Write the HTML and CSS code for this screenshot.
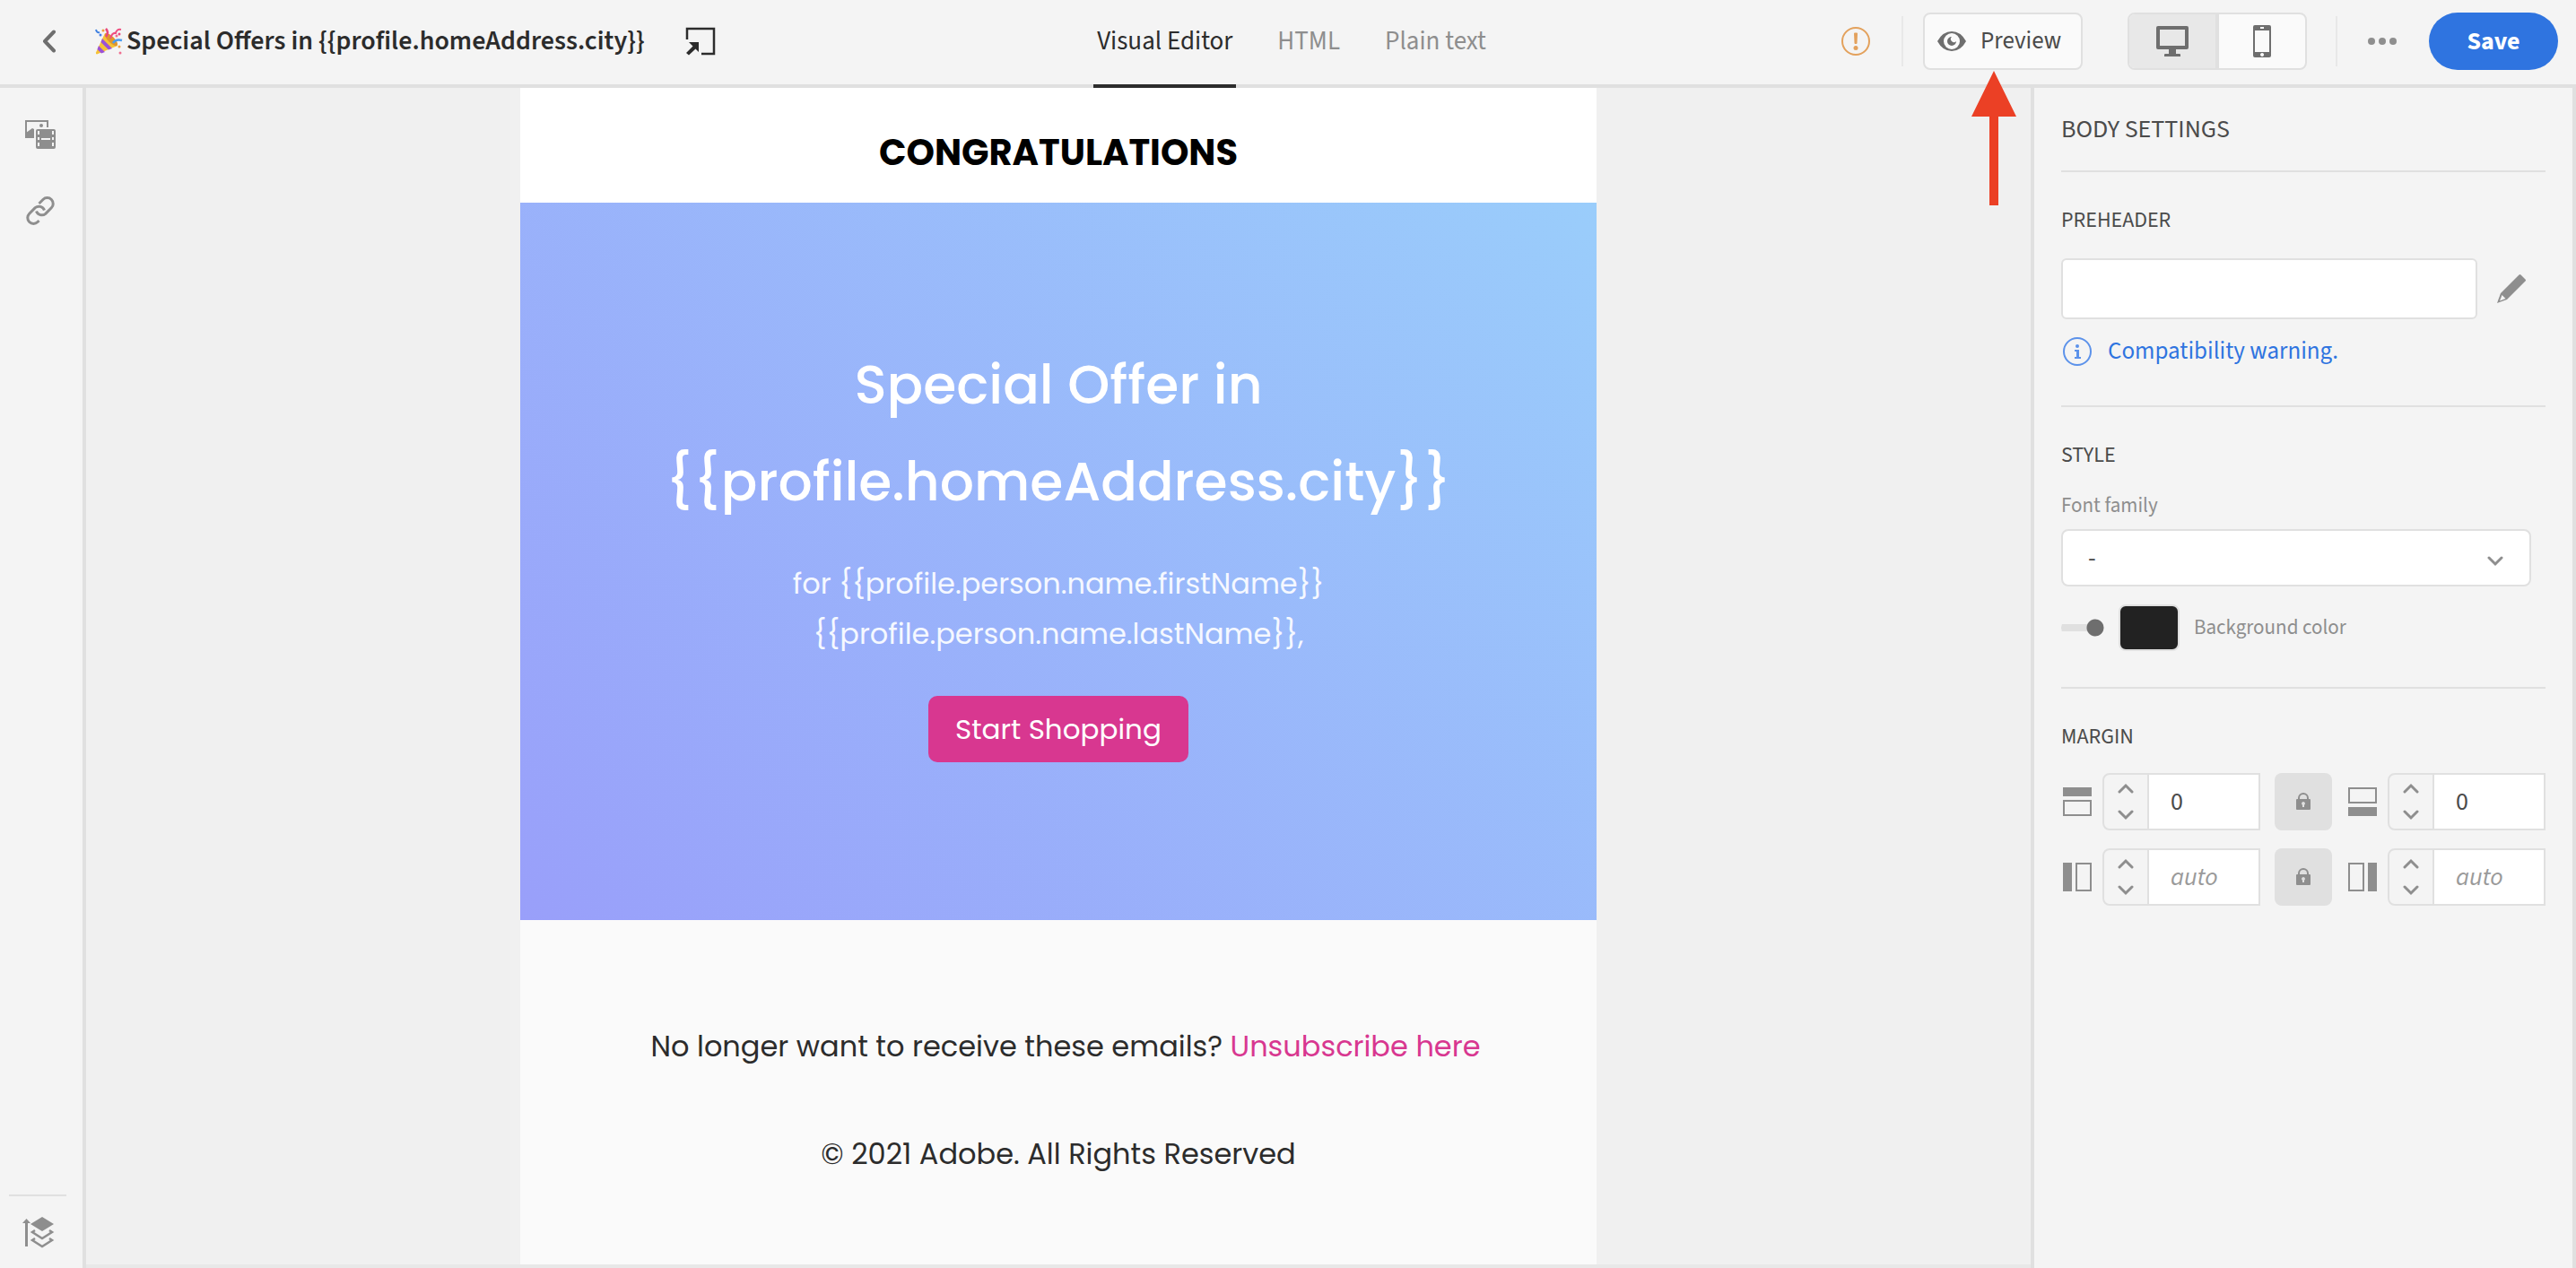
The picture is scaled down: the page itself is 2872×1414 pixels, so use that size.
FILE: index.html
```
<!DOCTYPE html>
<html lang="en">
<head>
<meta charset="utf-8">
<title>Special Offers – Email editor</title>
<link rel="stylesheet" href="styles.css">
</head>
<body>
<header class="topbar">
  <div class="topbar-left">
    <button class="icon-btn back" aria-label="Back"><svg width="16" height="26" viewBox="0 0 16 26"><path d="M13 2.500L3 13l10 10.500" fill="none" stroke="#6e6e6e" stroke-width="4" stroke-linecap="round" stroke-linejoin="round"/></svg></button>
    <svg class="party" width="31" height="31" viewBox="0 0 31 31" aria-hidden="true">
      <path d="M11 6l14 14L2 29.500q-1.500 0-1-2z" fill="#f6c236"/>
      <path d="M8 12l11 11-4 1.500L6.500 16zM4 20l7 7-4 1.500L2.500 24z" fill="#9b51d6"/>
      <ellipse cx="18" cy="13" rx="3.500" ry="9.500" transform="rotate(-45 18 13)" fill="#e0972c"/>
      <path d="M12 1q4 4 0 9" fill="none" stroke="#e8477c" stroke-width="2.500"/>
      <path d="M20 17q3-5 10-3" fill="none" stroke="#4b9cf0" stroke-width="2.500"/>
      <path d="M17 12q2-7 6-6 1-5 6-4" fill="none" stroke="#ef4f80" stroke-width="2"/>
      <path d="M1 2q1 4 4 3" fill="none" stroke="#3d7fe0" stroke-width="2"/>
      <circle cx="6" cy="8" r="1.500" fill="#4b7fe8"/><circle cx="27" cy="21" r="1.500" fill="#efa03c"/><circle cx="28" cy="28" r="1.500" fill="#ef6f90"/><circle cx="24" cy="9" r="1.500" fill="#ef6f90"/><circle cx="9" cy="3" r="1.500" fill="#efa03c"/><circle cx="27" cy="7" r="1.500" fill="#e84a80"/>
    </svg>
    <h1 class="title">Special Offers in {{profile.homeAddress.city}}</h1>
    <button class="icon-btn" aria-label="Open details"><svg width="34" height="32" viewBox="0 0 34 32"><path d="M2 14V2h30v28H18" fill="none" stroke="#2c2c2c" stroke-width="2.500"/><path d="M4 17h11v11l-3.500-3.500L4 31.500 1 29l7.500-7.500z" fill="#2c2c2c"/></svg></button>
  </div>
  <nav class="tabs">
    <a class="tab tab-active" href="#visual">Visual Editor</a>
    <a class="tab" href="#html">HTML</a>
    <a class="tab" href="#plain">Plain text</a>
  </nav>
  <div class="topbar-right">
    <button class="icon-btn alert" aria-label="Alerts"><svg width="32" height="32" viewBox="0 0 32 32"><circle cx="16" cy="16" r="15" fill="none" stroke="#e3a15c" stroke-width="2"/><path d="M14 7.500q0-1 1-1h2q1 0 1 1L17.500 18q0 1-1 1h-1q-1 0-1-1z" fill="#e3a15c"/><circle cx="16" cy="23.500" r="2.500" fill="#e3a15c"/></svg></button>
    <span class="rule"></span>
    <div class="preview-wrap">
      <button class="preview"><svg width="32" height="24" viewBox="0 0 32 24"><path d="M0 12Q6 1 16 1t16 11q-6 11-16 11T0 12z" fill="#6e6e6e"/><circle cx="16" cy="12" r="9" fill="#fafafa"/><path d="M16 7a5 5 0 1 0 5 5 2.500 2.500 0 0 1-5-5z" fill="#6e6e6e"/></svg>Preview</button>
      <svg class="pointer" width="52" height="152" viewBox="0 0 52 152" aria-hidden="true"><path d="M26 0l25 51H31v99H21V51H1z" fill="#eb4025"/></svg>
    </div>
    <div class="devices">
      <button class="device device-on" aria-label="Desktop"><svg width="36" height="34" viewBox="0 0 36 34"><path d="M2 0h32q2 0 2 2v22q0 2-2 2H22v5h4q1 0 1 1v2H9v-2q0-1 1-1h4v-5H2q-2 0-2-2V2q0-2 2-2zm2 4v18h28V4z" fill="#6e6e6e" fill-rule="evenodd"/></svg></button>
      <button class="device" aria-label="Mobile"><svg width="20" height="36" viewBox="0 0 20 36"><path d="M2 0h16q2 0 2 2v32q0 2-2 2H2q-2 0-2-2V2q0-2 2-2zm0 6v24h16V6zm6-4v2h4V2zm2 29a2 2 0 1 0 .1 0z" fill="#6e6e6e" fill-rule="evenodd"/></svg></button>
    </div>
    <span class="rule"></span>
    <button class="icon-btn more" aria-label="More"><svg width="32" height="8" viewBox="0 0 32 8" fill="#8e8e8e"><circle cx="4" cy="4" r="4"/><circle cx="16" cy="4" r="4"/><circle cx="28" cy="4" r="4"/></svg></button>
    <button class="save">Save</button>
  </div>
</header>
<div class="workspace">
  <aside class="rail">
    <button class="icon-btn" aria-label="Assets"><svg width="34" height="32" viewBox="0 0 34 32"><path d="M25 8V1H1v18h9" fill="none" stroke="#8e8e8e" stroke-width="2"/><path d="M1 14l7-5 2 1v10H0z" fill="#8e8e8e"/><circle cx="18" cy="6" r="2" fill="#8e8e8e"/><rect x="12" y="10" width="22" height="22" rx="2" fill="#8e8e8e"/><path d="M15 12v4m0 3v3m0 3v4m16-17v4m0 3v3m0 3v4M18 21h10" stroke="#f4f4f4" stroke-width="2"/></svg></button>
    <button class="icon-btn" aria-label="Links"><svg width="34" height="34" viewBox="0 0 34 34" fill="none" stroke="#8e8e8e" stroke-width="3"><path d="M15.500 9l4.500-4.500a6.500 6.500 0 0 1 9.300 9.300l-6.500 6.500a6.500 6.500 0 0 1-10.300-2.800"/><path d="M15.500 28L14 29.500a6.500 6.500 0 0 1-9.300-9.300l6.500-6.500a6.500 6.500 0 0 1 10.300 2.800"/></svg></button>
    <div class="rail-bottom">
      <button class="icon-btn" aria-label="Layers"><svg width="36" height="36" viewBox="0 0 36 36" fill="none" stroke="#8e8e8e"><path d="M4.500 34V6" stroke-width="3"/><path d="M0 8l4.500-5L9 8z" fill="#8e8e8e" stroke="none"/><path d="M22 1l13 8-13 8-13-8z" fill="#8e8e8e" stroke="none"/><path d="M14 16l-3 2 11 7 11-7-3-2M14 25l-3 2 11 7 11-7-3-2" stroke-width="2.500"/></svg></button>
    </div>
  </aside>
  <main class="canvas">
    <article class="email">
      <h2 class="congrats">CONGRATULATIONS</h2>
      <section class="hero">
        <h3 class="hero-title">Special Offer in<br>{{profile.homeAddress.city}}</h3>
        <p class="hero-text">for {{profile.person.name.firstName}}<br>{{profile.person.name.lastName}},</p>
        <a class="shop" href="#shop">Start Shopping</a>
      </section>
      <footer class="foot">
        <p class="optout">No longer want to receive these emails? <a class="unsub" href="#unsubscribe">Unsubscribe here</a></p>
        <p>© 2021 Adobe. All Rights Reserved</p>
      </footer>
    </article>
  </main>
  <aside class="panel">
    <h2 class="panel-title">BODY SETTINGS</h2>
    <section class="group">
      <h3 class="group-title"><label for="preheader">PREHEADER</label></h3>
      <div class="pre-row">
        <input class="field" id="preheader" type="text">
        <button class="icon-btn" aria-label="Edit preheader"><svg width="32" height="32" viewBox="0 0 32 32"><path d="M24.500.500q1-1 2 0l5 5q1 1 0 2L11 28 0 32 4 21z" fill="#8e8e8e"/><path d="M5.500 23l4 4-6.500 2.500z" fill="#f4f4f4"/></svg></button>
      </div>
      <a class="warn" href="#compatibility"><svg width="32" height="32" viewBox="0 0 32 32"><circle cx="16" cy="16" r="15" fill="none" stroke="#5c92ea" stroke-width="2"/><circle cx="16" cy="10" r="2" fill="#5c92ea"/><path d="M13 14h5v8h2v2h-7v-2h2v-6h-2z" fill="#5c92ea"/></svg>Compatibility warning.</a>
    </section>
    <section class="group">
      <h3 class="group-title">STYLE</h3>
      <label class="label" for="family">Font family</label>
      <div class="select-wrap">
        <select class="select" id="family"><option>-</option></select>
        <svg class="caret" width="18" height="12" viewBox="0 0 18 12"><path d="M2 2l7 7 7-7" fill="none" stroke="#8e8e8e" stroke-width="3" stroke-linecap="round"/></svg>
      </div>
      <div class="color-row">
        <input class="switch" type="checkbox" id="bg-on" checked>
        <button class="swatch" aria-label="Pick background color"></button>
        <label class="label" for="bg-on">Background color</label>
      </div>
    </section>
    <section class="group">
      <h3 class="group-title">MARGIN</h3>
      <div class="margin-row">
        <svg class="side" width="32" height="32" viewBox="0 0 32 32"><path d="M0 0h32v10H0z" fill="#8e8e8e"/><path d="M1 15h30v16H1z" fill="none" stroke="#8e8e8e" stroke-width="2"/></svg>
        <div class="stepper">
          <div class="steps"><button class="step" aria-label="Increase top"><svg width="18" height="12" viewBox="0 0 18 12"><path d="M2 10l7-7 7 7"/></svg></button><button class="step" aria-label="Decrease top"><svg width="18" height="12" viewBox="0 0 18 12"><path d="M2 2l7 7 7-7"/></svg></button></div>
          <input class="num" type="text" value="0" aria-label="Top margin">
        </div>
        <button class="lock" aria-label="Lock vertical margins"><svg width="16" height="20" viewBox="0 0 16 20"><path d="M3 8V6a5 5 0 0 1 10 0v2" fill="none" stroke="#8e8e8e" stroke-width="2"/><path d="M1 7h14q1 0 1 1v10q0 1-1 1H1q-1 0-1-1V8q0-1 1-1zm7 3a2 2 0 0 0-1 3.700V16h2v-2.300A2 2 0 0 0 8 10z" fill="#8e8e8e" fill-rule="evenodd"/></svg></button>
        <svg class="side" width="32" height="32" viewBox="0 0 32 32"><path d="M0 22h32v10H0z" fill="#8e8e8e"/><path d="M1 1h30v16H1z" fill="none" stroke="#8e8e8e" stroke-width="2"/></svg>
        <div class="stepper">
          <div class="steps"><button class="step" aria-label="Increase bottom"><svg width="18" height="12" viewBox="0 0 18 12"><path d="M2 10l7-7 7 7"/></svg></button><button class="step" aria-label="Decrease bottom"><svg width="18" height="12" viewBox="0 0 18 12"><path d="M2 2l7 7 7-7"/></svg></button></div>
          <input class="num" type="text" value="0" aria-label="Bottom margin">
        </div>
      </div>
      <div class="margin-row">
        <svg class="side" width="32" height="32" viewBox="0 0 32 32"><path d="M0 0h10v32H0z" fill="#8e8e8e"/><path d="M15 1h16v30H15z" fill="none" stroke="#8e8e8e" stroke-width="2"/></svg>
        <div class="stepper">
          <div class="steps"><button class="step" aria-label="Increase left"><svg width="18" height="12" viewBox="0 0 18 12"><path d="M2 10l7-7 7 7"/></svg></button><button class="step" aria-label="Decrease left"><svg width="18" height="12" viewBox="0 0 18 12"><path d="M2 2l7 7 7-7"/></svg></button></div>
          <input class="num" type="text" placeholder="auto" aria-label="Left margin">
        </div>
        <button class="lock" aria-label="Lock horizontal margins"><svg width="16" height="20" viewBox="0 0 16 20"><path d="M3 8V6a5 5 0 0 1 10 0v2" fill="none" stroke="#8e8e8e" stroke-width="2"/><path d="M1 7h14q1 0 1 1v10q0 1-1 1H1q-1 0-1-1V8q0-1 1-1zm7 3a2 2 0 0 0-1 3.700V16h2v-2.300A2 2 0 0 0 8 10z" fill="#8e8e8e" fill-rule="evenodd"/></svg></button>
        <svg class="side" width="32" height="32" viewBox="0 0 32 32"><path d="M22 0h10v32H22z" fill="#8e8e8e"/><path d="M1 1h16v30H1z" fill="none" stroke="#8e8e8e" stroke-width="2"/></svg>
        <div class="stepper">
          <div class="steps"><button class="step" aria-label="Increase right"><svg width="18" height="12" viewBox="0 0 18 12"><path d="M2 10l7-7 7 7"/></svg></button><button class="step" aria-label="Decrease right"><svg width="18" height="12" viewBox="0 0 18 12"><path d="M2 2l7 7 7-7"/></svg></button></div>
          <input class="num" type="text" placeholder="auto" aria-label="Right margin">
        </div>
      </div>
    </section>
  </aside>
</div>
</body>
</html>
```
FILE: styles.css
```
* { box-sizing: border-box; }
body {
  margin: 0;
  min-height: 100vh;
  display: flex;
  flex-direction: column;
  background: #f0f0f0;
  color: #4b4b4b;
  font: 28px/32px "Adobe Clean", "Source Sans 3", "Source Sans Pro", "Open Sans", sans-serif;
}
h1, h2, h3, p { margin: 0; font-weight: 400; }
button, input, select { font: inherit; color: inherit; margin: 0; }
button { padding: 0; border: 0; background: none; }
a { color: inherit; text-decoration: none; }
svg { display: block; flex: none; }
.icon-btn { display: flex; align-items: center; justify-content: center; flex: none; }

.topbar {
  display: grid;
  grid-template-columns: 1fr auto 1fr;
  height: 98px;
  border-bottom: 4px solid #e0e0e0;
  background: #f4f4f4;
}
.topbar-left { display: flex; align-items: center; padding-left: 47px; padding-bottom: 2px; }
.party { margin-left: 43px; margin-right: 4px; }
.title { font-size: 30px; font-weight: 600; color: #2c2c2c; margin-right: 45px; white-space: nowrap; }
.tabs { display: flex; gap: 42px; margin: 0 0 -4px 8px; }
.tab { padding: 30px 4px 0; font-size: 29px; color: #8e8e8e; border-bottom: 4px solid transparent; }
.tab-active { color: #2c2c2c; border-color: #2c2c2c; }
.topbar-right { display: flex; align-items: center; justify-content: flex-end; padding-right: 20px; padding-bottom: 2px; }
.rule { width: 2px; height: 56px; background: #e8e8e8; }
.alert { margin-right: 35px; }
.preview-wrap { position: relative; margin: 0 50px 0 22px; }
.preview {
  display: flex; align-items: center; gap: 16px;
  width: 178px; height: 64px; padding-left: 14px;
  border: 2px solid #e0e0e0; border-radius: 8px; background: #fafafa;
  font-size: 27px;
}
.pointer { position: absolute; left: 53px; top: 65px; }
.devices { display: flex; width: 200px; height: 64px; margin-right: 32px; border: 2px solid #e0e0e0; border-radius: 8px; overflow: hidden; background: #fafafa; }
.device { flex: 1; display: flex; align-items: center; justify-content: center; }
.device-on { background: #e8e8e8; border-right: 4px solid #e0e0e0; }
.more { margin: 0 36px 0 34px; }
.save { width: 144px; height: 64px; border-radius: 32px; background: #2f74e0; color: #fff; font-weight: 700; }

.workspace { flex: 1; display: flex; }
.rail { width: 96px; flex: none; display: flex; flex-direction: column; align-items: center; gap: 52px; padding: 36px 2px 0 0; border-right: 4px solid #e0e0e0; background: #f4f4f4; }
.rail-bottom { align-self: flex-start; margin: auto 0 0 10px; width: 64px; height: 82px; padding: 22px 0 0 15px; border-top: 2px solid #e0e0e0; }
.rail-bottom .icon-btn { width: 36px; }
.canvas { flex: 1; display: flex; justify-content: center; border-bottom: 4px solid #e8e8e8; }
.email { width: 1200px; display: flex; flex-direction: column; background: #fafafa; font-family: Poppins, Inter, sans-serif; text-align: center; }
.congrats { height: 128px; padding-top: 48px; background: #fff; color: #000; font-size: 40px; line-height: 48px; font-weight: 700; }
.hero { height: 800px; padding-top: 149px; background: linear-gradient(45deg, #999ffa, #9acdfb); color: #fff; }
.hero-title { font-size: 60px; line-height: 108px; font-weight: 500; }
.hero-text { margin-top: 32px; font-size: 32px; line-height: 56px; color: #f5f8ff; }
.shop { display: inline-block; margin-top: 41px; padding: 0 30px; border-radius: 10px; background: #d83790; font-size: 31px; line-height: 74px; }
.foot { display: flex; flex-direction: column; gap: 64px; padding-top: 113px; font-size: 32px; line-height: 56px; color: #2c2c2c; }
.optout { padding-left: 16px; }
.unsub { color: #d83790; }

.panel { width: 608px; flex: none; padding: 0 30px; border-left: 4px solid #e0e0e0; border-right: 4px solid #e0e0e0; background: #f4f4f4; }
.panel-title { padding: 30px 0; border-bottom: 2px solid #e0e0e0; font-size: 28px; line-height: 32px; }
.group { padding-top: 38px; }
.group + .group { border-top: 2px solid #e0e0e0; }
.group-title { font-size: 24px; line-height: 32px; }
.pre-row { display: flex; align-items: center; gap: 22px; margin-top: 26px; }
.field { flex: none; width: 464px; height: 68px; border: 2px solid #e0e0e0; border-radius: 6px; background: #fff; padding: 0 28px; }
.warn { display: flex; align-items: center; gap: 18px; margin: 20px 0 44px 2px; color: #2f74e0; font-size: 27px; }
.label { color: #8e8e8e; font-size: 23px; }
.group-title + .label { display: block; margin: 24px 0 10px; }
.select-wrap { position: relative; width: 524px; }
.select { display: block; appearance: none; width: 100%; height: 64px; padding: 0 28px; border: 2px solid #e0e0e0; border-radius: 8px; background: #fff; }
.caret { position: absolute; right: 31px; top: 30px; }
.color-row { display: flex; align-items: center; margin: 20px 0 40px; }
.switch { appearance: none; width: 48px; height: 20px; margin-right: 16px; border-radius: 10px; background: radial-gradient(circle at 38px 10px, #6e6e6e 9px, transparent 10px), linear-gradient(#e0e0e0, #e0e0e0) 0 6px / 38px 8px no-repeat; }
.swatch { width: 68px; height: 52px; margin-right: 16px; border: 2px solid #e0e0e0; border-radius: 8px; background: #222; }
.margin-row { display: flex; align-items: center; margin-top: 24px; }
.margin-row + .margin-row { margin-top: 20px; }
.side { margin: 0 12px 0 2px; }
.stepper { flex: 1; display: flex; height: 64px; border: 2px solid #e0e0e0; border-radius: 8px 0 0 8px; overflow: hidden; }
.steps { width: 50px; flex: none; display: flex; flex-direction: column; justify-content: center; gap: 18px; border-right: 2px solid #e0e0e0; }
.step { display: flex; justify-content: center; fill: none; stroke: #8e8e8e; stroke-width: 3; stroke-linecap: round; }
.num { flex: 1; width: 0; min-width: 0; border: 0; background: #fff; padding: 0 24px; font-size: 28px; }
.num::placeholder { color: #9a9a9a; font-style: italic; opacity: 1; }
.lock { display: flex; align-items: center; justify-content: center; flex: none; width: 64px; height: 64px; margin: 0 16px; border-radius: 8px; background: #e0e0e0; }
```
